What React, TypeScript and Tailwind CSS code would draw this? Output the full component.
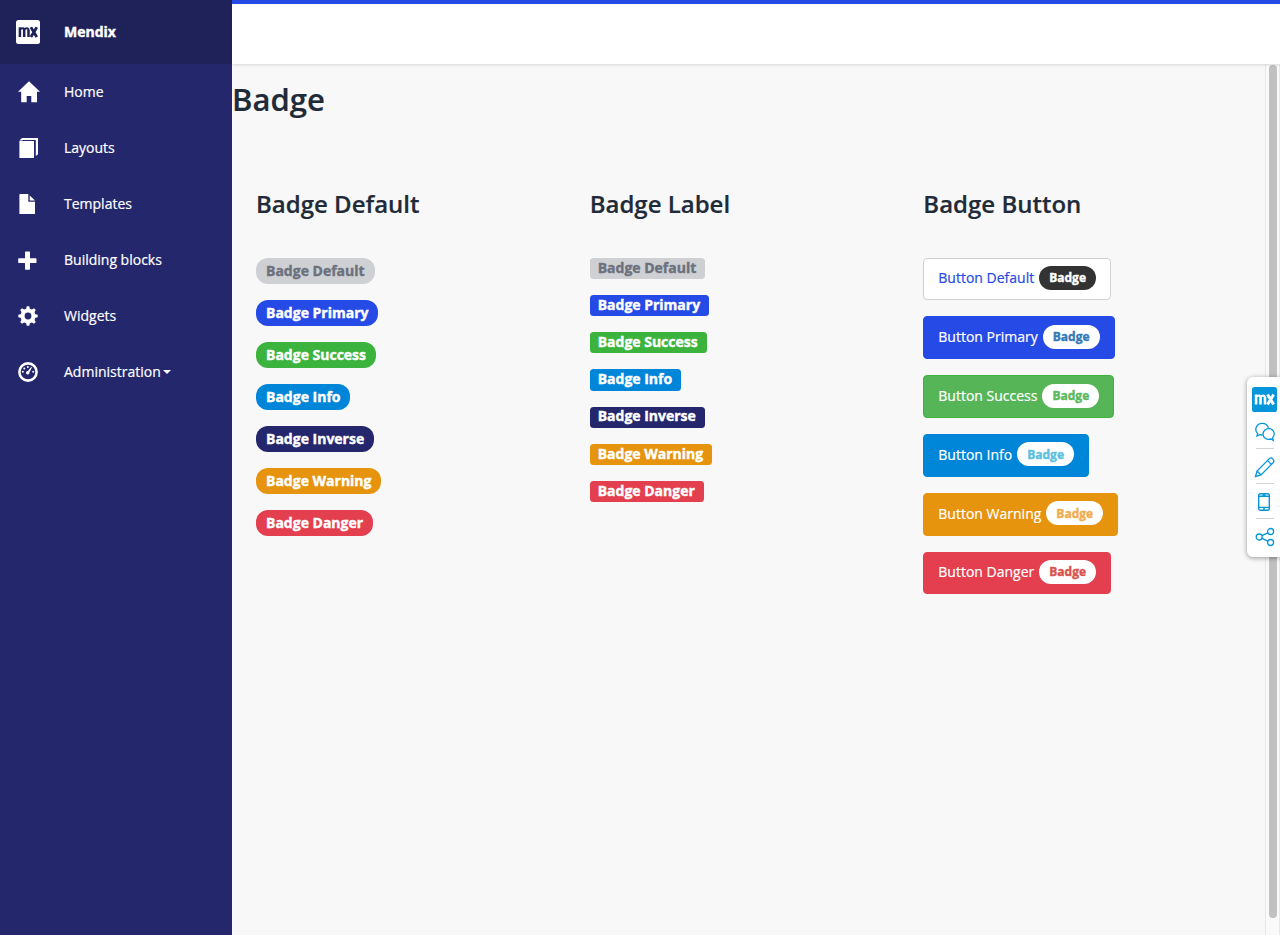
import type { ReactNode } from 'react';

const gearTeeth = [0, 45, 90, 135, 180, 225, 270, 315];

const navItems: { label: string; icon: ReactNode; caret?: boolean }[] = [
  { label: 'Home', icon: <path d="M11 1 22 11.4H19V22H13.3V15.6H8.7V22H3.2V11.4H0Z" transform="translate(0 .3)" /> },
  {
    label: 'Layouts',
    icon: (
      <>
        <path d="M1.4 5H16V22H1.4Z" />
        <path d="M1.4 4.6 4 2H20V18.2L17.8 20V4H5L4.4 4.6Z" />
      </>
    ),
  },
  { label: 'Templates', icon: <path d="M2 2H10.3V9.8H17V22H1.4V2.6ZM11.7 3.6 17 8.6H11.7Z" /> },
  { label: 'Building blocks', icon: <path d="M7.6 3.5H11.4L12 4V10.3H18L18.5 10.8V14.5L18 15H12V21.3L11.4 21.8H7.6L7 21.3V15H.8L.2 14.5V10.8L.8 10.3H7V4Z" /> },
  {
    label: 'Widgets',
    icon: (
      <>
        <circle cx="10" cy="12" r="5.5" fill="none" stroke="white" strokeWidth="4.2" />
        {gearTeeth.map((angle) => (
          <path key={angle} d="M8 5.6 8.7 2.3H11.3L12 5.6Z" transform={`rotate(${angle} 10 12)`} />
        ))}
      </>
    ),
  },
  {
    label: 'Administration',
    caret: true,
    icon: (
      <>
        <circle cx="10" cy="12" r="8.6" fill="none" stroke="white" strokeWidth="2.6" />
        <circle cx="4.8" cy="11.7" r="1" />
        <circle cx="6.3" cy="8.4" r="1" />
        <circle cx="9.8" cy="7" r="1" />
        <circle cx="15.2" cy="11.7" r="1" />
        <path d="M13.2 6.9 14 7.3 11.4 12.4A1.7 1.7 0 1 1 9.9 11Z" />
      </>
    ),
  },
];

const badges = [
  ['Badge Default', 'bg-[#cfd0d4] text-[#6c717e]'],
  ['Badge Primary', 'bg-[#264ae5] text-white'],
  ['Badge Success', 'bg-[#3cb33d] text-white'],
  ['Badge Info', 'bg-[#0086d9] text-white'],
  ['Badge Inverse', 'bg-[#24276c] text-white'],
  ['Badge Warning', 'bg-[#e6930d] text-white'],
  ['Badge Danger', 'bg-[#e33f4e] text-white'],
];

const buttons = [
  ['Button Default', 'bg-white border-[#ced0d3] text-[#264ae5]', 'bg-[#333333] text-white'],
  ['Button Primary', 'bg-[#264ae5] border-[#264ae5] text-white', 'bg-white text-[#337ab7]'],
  ['Button Success', 'bg-[#56b557] border-[#3cb33d] text-white', 'bg-white text-[#5cb85c]'],
  ['Button Info', 'bg-[#0086d9] border-[#0086d9] text-white', 'bg-white text-[#5bc0de]'],
  ['Button Warning', 'bg-[#e6930d] border-[#e6930d] text-white', 'bg-white text-[#f0ad4e]'],
  ['Button Danger', 'bg-[#e33f4e] border-[#e33f4e] text-white', 'bg-white text-[#d9534f]'],
];

function MxMark({ color }: { color: string }) {
  return (
    <g fill="none" stroke={color}>
      <path d="M3.9 16.9V7.3M8.2 16.9V8.5M12.5 16.9V9.7" strokeWidth="2.5" />
      <path d="M4.5 8.9Q8.2 7.1 8.2 10M8.6 8.9Q12.5 7.1 12.5 10.4" strokeWidth="2" />
      <path d="M14.9 7.3 20.8 16.9M20.8 7.3 14.9 16.9" strokeWidth="2.8" />
    </g>
  );
}

function Sidebar() {
  return (
    <aside className="w-[232px] shrink-0 bg-[#24276c] text-white">
      <div className="flex h-16 items-center bg-[#1f2259] pl-4">
        <svg className="size-6" viewBox="0 0 24 24">
          <rect width="24" height="24" rx="2.5" fill="white" />
          <MxMark color="#1f2259" />
        </svg>
        <span className="ml-6 text-sm font-bold [-webkit-text-stroke:0.4px]">Mendix</span>
      </div>
      <nav>
        {navItems.map((item) => (
          <a key={item.label} className="flex h-14 items-center pl-[18px]">
            <svg className="h-6 w-[22px]" viewBox="0 0 22 24" fill="white">
              {item.icon}
            </svg>
            <span className="ml-6 text-sm [-webkit-text-stroke:0.2px]">{item.label}</span>
            {item.caret && (
              <svg className="ml-0.5 h-1 w-2" viewBox="0 0 8 4" fill="white">
                <path d="M0 0H8L4 4Z" />
              </svg>
            )}
          </a>
        ))}
      </nav>
    </aside>
  );
}

function Column({ title, children }: { title: string; children: ReactNode }) {
  return (
    <section>
      <h2 className="mb-[37px] text-2xl leading-[34px] font-semibold [-webkit-text-stroke:0.2px]">{title}</h2>
      {children}
    </section>
  );
}

function ShareBar() {
  return (
    <div className="absolute top-[377px] right-0 flex h-[180px] w-[33px] flex-col items-center rounded-l-md bg-white pt-2.5 pl-[2px] shadow-[0_1px_5px_rgba(0,0,0,0.4)]">
      <svg className="h-[25px] w-[25px] shrink-0" viewBox="0 0 24 24">
        <rect width="24" height="24" rx="2.5" fill="#0595db" />
        <MxMark color="white" />
      </svg>
      <div className="mt-px flex w-[18px] flex-col items-center divide-y divide-[#cfd2d6] text-[#0595db]">
        <div className="flex h-9 w-full items-center justify-center pt-0.5">
          <svg className="h-5 w-[22px] shrink-0" viewBox="0 0 22 20" fill="none" stroke="currentColor" strokeWidth="1.3">
            <path d="M8.8 12.9Q7.2 13.2 5.7 12.7L2.9 14.1 3.7 11.6C-.3 7.8 2.6 1.3 8.2 1.3Q12.9 1.3 14.4 5.7" />
            <path d="M17.1 17C12.8 18.2 9 15.9 9 12.3 9 8.6 12 6.4 15 6.6 20.2 7 21.6 12.5 18.6 15.6L19.3 18.5Z" />
          </svg>
        </div>
        <div className="flex h-[35px] w-full items-center justify-center pt-0.5">
          <svg className="h-[22px] w-[22px] shrink-0" viewBox="0 0 22 22" fill="none" stroke="currentColor" strokeWidth="1.3">
            <path d="M1.5 20.5 3 15 15.4 2.6Q17 1 18.8 2.9T19.3 6.5L7 19ZM3 15 7 19M13.6 4.6 17.5 8.4" />
          </svg>
        </div>
        <div className="flex h-[35px] w-full items-center justify-center pt-0.5">
          <svg className="mr-0.5 h-[18px] w-3 shrink-0" viewBox="0 0 12 18" fill="none" stroke="currentColor" strokeWidth="1.4">
            <rect x=".7" y=".7" width="10.6" height="16.6" rx="1.5" />
            <path d="M1 3.3H11M1 14.4H11M4.5 2H7.5M5 16H7" />
          </svg>
        </div>
        <div className="flex h-[35px] w-full items-center justify-center">
          <svg className="h-5 w-5 shrink-0" viewBox="0 0 20 20" fill="none" stroke="currentColor" strokeWidth="1.3">
            <circle cx="4.2" cy="10" r="3" />
            <circle cx="15.6" cy="4.5" r="3" />
            <circle cx="15.6" cy="15.5" r="3" />
            <path d="M6.9 8.7 12.9 5.8M6.9 11.3 12.9 14.2" />
          </svg>
        </div>
      </div>
    </div>
  );
}

export default function App() {
  return (
    <div className="relative flex h-[935px] w-[1280px] overflow-hidden bg-[#f8f8f8] font-['Open_Sans',sans-serif] text-[#1f2b38]">
      <Sidebar />
      <div className="flex min-w-0 flex-1 flex-col">
        <header className="z-10 h-16 shrink-0 border-t-4 border-[#264ae5] bg-white shadow-[0_1px_3px_rgba(0,0,0,0.14)]" />
        <div className="flex min-h-0 flex-1">
          <main className="min-w-0 flex-1 pt-[13px]">
            <h1 className="text-[31px] leading-[44px] font-semibold [-webkit-text-stroke:0.2px]">Badge</h1>
            <div className="mt-[66px] ml-6 grid w-[1001px] grid-cols-3">
              <Column title="Badge Default">
                <div className="flex flex-col items-start gap-4">
                  {badges.map(([label, style]) => (
                    <span key={label} className={`flex h-[26px] items-center rounded-xl px-2.5 text-sm font-bold [-webkit-text-stroke:0.4px] ${style}`}>
                      {label}
                    </span>
                  ))}
                </div>
              </Column>
              <Column title="Badge Label">
                <div className="flex flex-col items-start gap-4">
                  {badges.map(([label, style]) => (
                    <span key={label} className={`flex h-[21.15px] items-center rounded-[3.5px] pr-[8.8px] pb-[1.5px] pl-2 text-sm font-bold [-webkit-text-stroke:0.4px] ${style}`}>
                      {label}
                    </span>
                  ))}
                </div>
              </Column>
              <Column title="Badge Button">
                <div className="-mt-[0.4px] flex flex-col items-start gap-4">
                  {buttons.map(([label, style, badge]) => (
                    <button key={label} className={`flex h-[42.8px] items-start rounded border px-3.5 pt-[7.4px] text-sm ${style}`}>
                      <span className="mt-[2.4px] [-webkit-text-stroke:0.2px]">{label}</span>
                      <span className={`ml-[5px] flex h-6 items-center rounded-xl px-2.5 pt-[0.8px] text-xs font-bold [-webkit-text-stroke:0.4px] ${badge}`}>Badge</span>
                    </button>
                  ))}
                </div>
              </Column>
            </div>
          </main>
          <div className="flex w-[15px] shrink-0 justify-center border-x border-[#e8e8e8] bg-[#fafafa] pt-px">
            <div className="h-[853px] w-2 rounded-full bg-[#c1c1c1]" />
          </div>
        </div>
      </div>
      <ShareBar />
    </div>
  );
}
